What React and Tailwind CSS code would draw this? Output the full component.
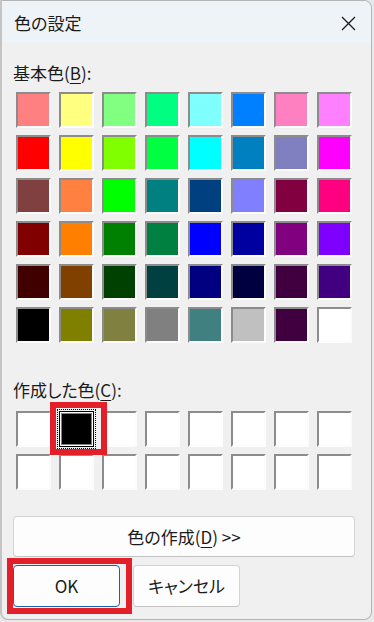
import React from "react";

const basic = [
  ["bg-[#FF8080]", "bg-[#FFFF80]", "bg-[#80FF80]", "bg-[#00FF80]", "bg-[#80FFFF]", "bg-[#0080FF]", "bg-[#FF80C0]", "bg-[#FF80FF]"],
  ["bg-[#FF0000]", "bg-[#FFFF00]", "bg-[#80FF00]", "bg-[#00FF40]", "bg-[#00FFFF]", "bg-[#0080C0]", "bg-[#8080C0]", "bg-[#FF00FF]"],
  ["bg-[#804040]", "bg-[#FF8040]", "bg-[#00FF00]", "bg-[#008080]", "bg-[#004080]", "bg-[#8080FF]", "bg-[#800040]", "bg-[#FF0080]"],
  ["bg-[#800000]", "bg-[#FF8000]", "bg-[#008000]", "bg-[#008040]", "bg-[#0000FF]", "bg-[#0000A0]", "bg-[#800080]", "bg-[#8000FF]"],
  ["bg-[#400000]", "bg-[#804000]", "bg-[#004000]", "bg-[#004040]", "bg-[#000080]", "bg-[#000040]", "bg-[#400040]", "bg-[#400080]"],
  ["bg-[#000000]", "bg-[#808000]", "bg-[#808040]", "bg-[#808080]", "bg-[#408080]", "bg-[#C0C0C0]", "bg-[#400040]", "bg-[#FFFFFF]"],
];

function Swatch({ cls }) {
  return (
    <div
      className={`w-[35px] h-[36px] border-2 border-t-[#8c8c8c] border-l-[#8c8c8c] border-r-[#fcfcfc] border-b-[#fcfcfc] ${cls}`}
    />
  );
}

function SelectedSwatch() {
  return (
    <div className="relative w-[35px] h-[36px]">
      <div className="w-full h-full border border-black bg-white p-px outline-1 outline-dotted outline-black outline-offset-[1px]">
        <div className="w-full h-full border border-[#808080] bg-black" />
      </div>
      <div className="absolute left-[-9px] top-[-9px] w-[57px] h-[53px] border-[6px] border-[#e3202a] z-10" />
    </div>
  );
}

export default function App() {
  const font = "font-['Noto_Sans_CJK_JP','Noto_Sans',sans-serif] [font-feature-settings:'palt']";
  return (
    <div className={`w-[374px] h-[622px] bg-[#e9e9e9] ${font} text-[#1b1b1b]`}>
      <div className="w-[372px] h-[620px] flex flex-col bg-[#f0f0f0] border border-[#b4b4b4] border-l-2 border-l-[#c4c4c4] rounded-tr-[8px] rounded-br-[8px] rounded-bl-[8px] overflow-hidden">
        <div className="h-[42px] shrink-0 bg-[#eef3f7] flex items-center justify-between pl-[12px] pr-[15px]">
          <span className="text-[17px] leading-[24px] pt-[1px]">色の設定</span>
          <svg width="15" height="15" viewBox="0 0 15 15" className="mt-[2px]">
            <path d="M1 1 L14 14 M14 1 L1 14" stroke="#1b1b1b" strokeWidth="1.3" fill="none" />
          </svg>
        </div>
        <div className="flex flex-col pl-[11px] pr-[15px]">
          <div className="mt-[18px] text-[17px] leading-[24px] h-[24px]">
            基本色(<span className="underline underline-offset-[3px] decoration-1">B</span>):
          </div>
          <div className="mt-[7px] ml-[3px] grid grid-cols-[repeat(8,35px)] gap-x-[8px] gap-y-[7px]">
            {basic.flat().map((c, i) => (
              <Swatch key={i} cls={c} />
            ))}
          </div>
          <div className="mt-[35px] text-[17px] leading-[24px] h-[24px]">
            作成した色(<span className="underline underline-offset-[3px] decoration-1">C</span>):
          </div>
          <div className="mt-[9px] ml-[3px] grid grid-cols-[repeat(8,35px)] gap-x-[8px] gap-y-[7px]">
            {Array.from({ length: 16 }).map((_, i) =>
              i === 1 ? <SelectedSwatch key={i} /> : <Swatch key={i} cls="bg-white" />
            )}
          </div>
          <button className="mt-[26px] w-[342px] h-[41px] rounded-[4px] bg-[#fdfdfd] border border-[#d3d3d3] border-b-[#c2c2c2] text-[17px] leading-[24px] flex items-center justify-center">
            <span>
              色の作成(<span className="underline underline-offset-[3px] decoration-1">D</span>) &gt;&gt;
            </span>
          </button>
          <div className="mt-[8px] flex gap-[13px]">
            <div className="relative">
              <button className="w-[107px] h-[42px] rounded-[4px] bg-[#fdfdfd] border border-[#1a64a8] text-[17px] leading-[24px] flex items-center justify-center">
                OK
              </button>
              <div className="absolute left-[-6px] top-[-7px] w-[125px] h-[56px] border-[6px] border-[#e3202a]" />
            </div>
            <button className="w-[107px] h-[42px] rounded-[4px] bg-[#fdfdfd] border border-[#d3d3d3] border-b-[#c2c2c2] text-[17px] leading-[24px] flex items-center justify-center">
              キャンセル
            </button>
          </div>
        </div>
      </div>
    </div>
  );
}
